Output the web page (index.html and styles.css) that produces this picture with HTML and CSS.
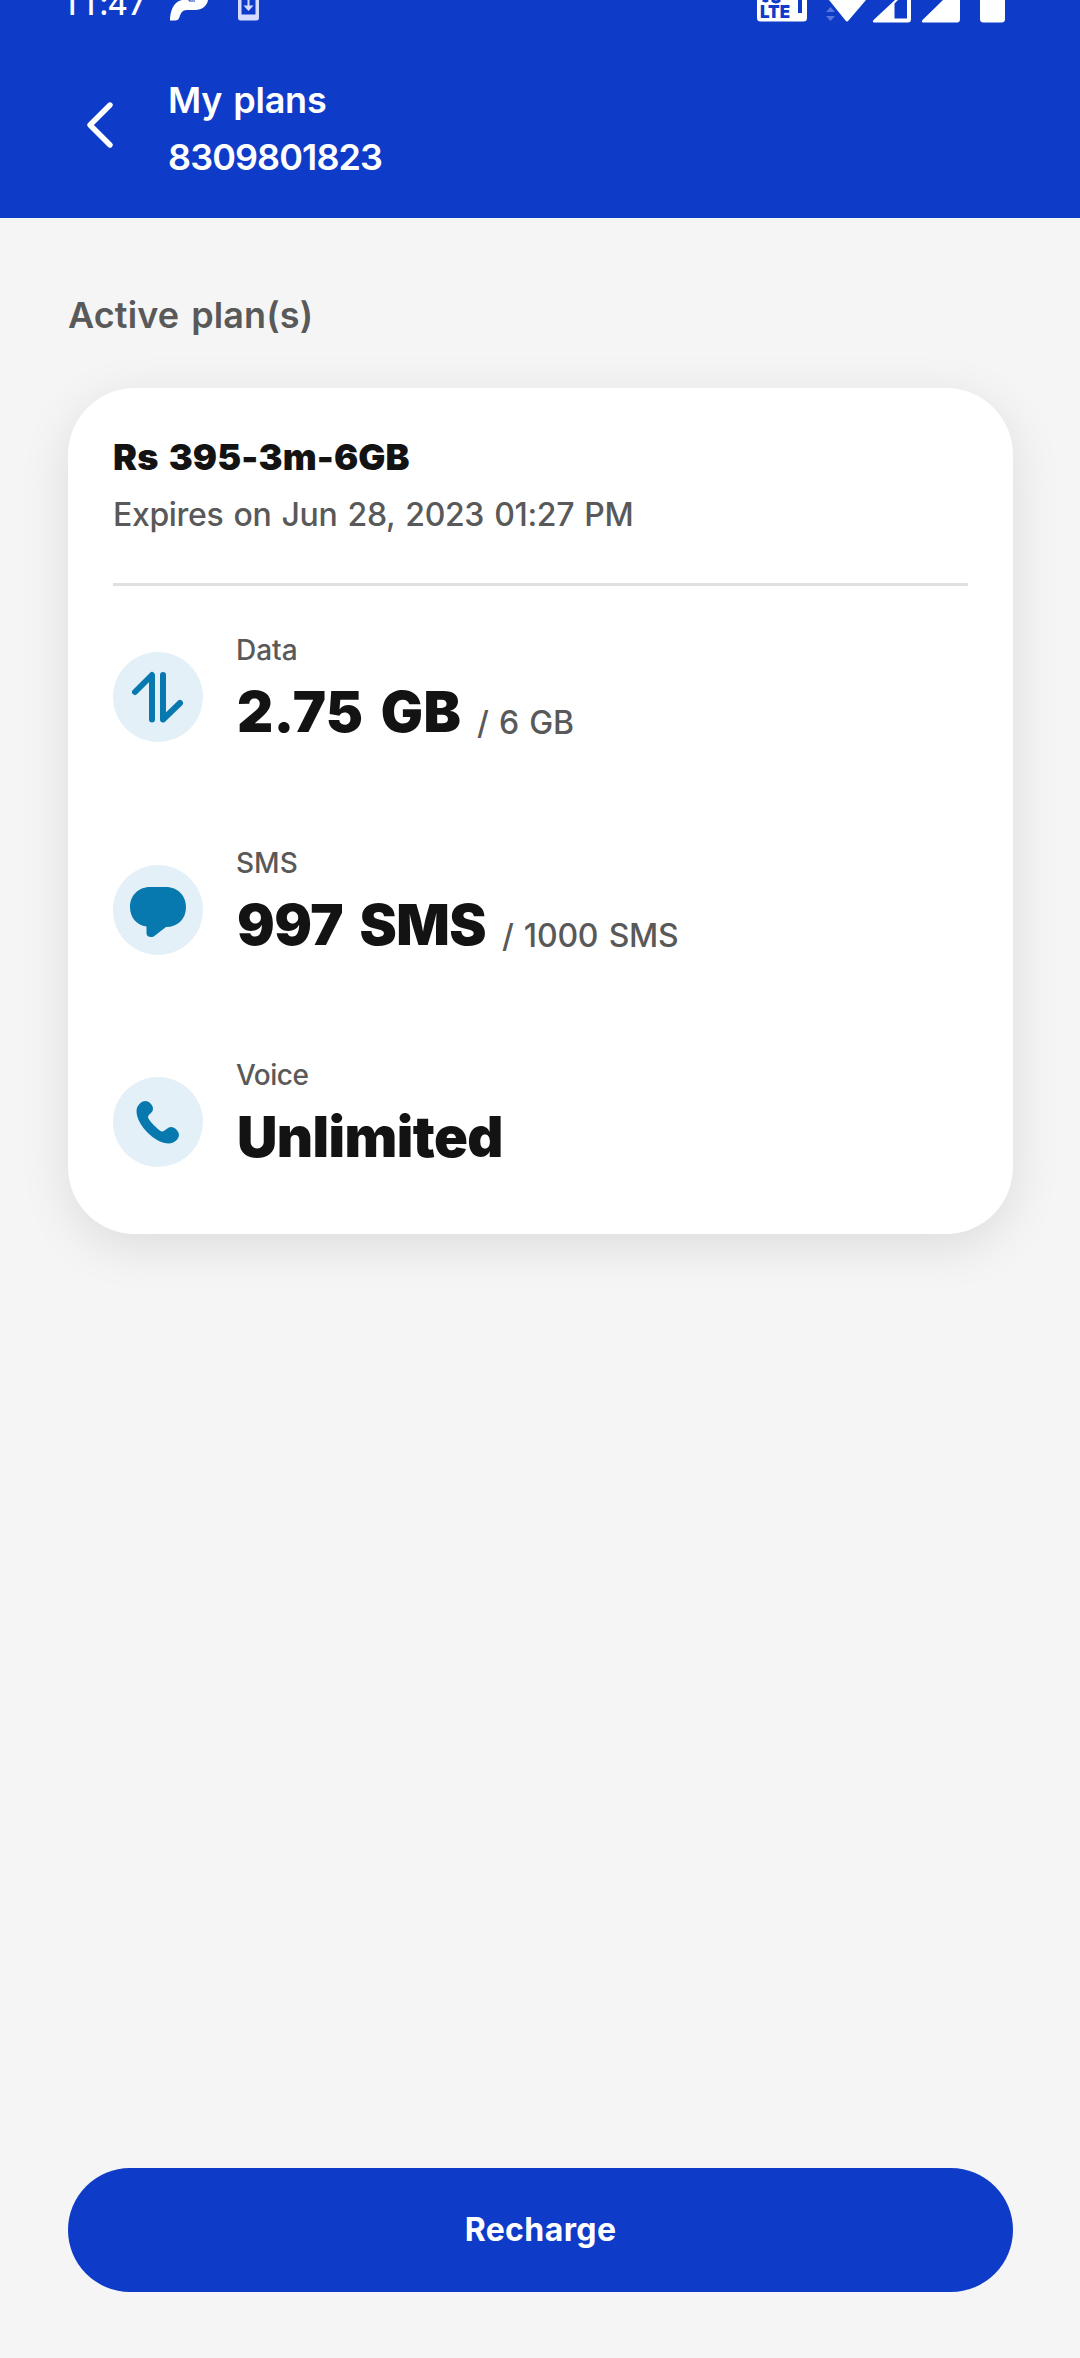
FILE: index.html
```html
<!DOCTYPE html>
<html lang="en">
<head>
<meta charset="utf-8">
<meta name="viewport" content="width=device-width">
<title>My plans</title>
<link rel="stylesheet" href="styles.css">
</head>
<body>
<div class="screen">
  <header class="header">
    <div class="status">
      <span class="time">11:47</span>
      <svg class="status-left" width="100" height="22" viewBox="164 0 100 22">
        <path d="M170 20.500C170 12 173 2 182 0H208C207 6 202 10 195 10H187C182 10 181 13 179.500 17Q178.500 20.500 175 20.500Z" fill="#fff"/>
        <path d="M189 0V1H195" fill="none" stroke="#0f3bc9" stroke-width="1"/>
        <path d="M238 0H259V18Q259 20.500 256 20.500H241Q238 20.500 238 18ZM241.500 0V14.500H255.500V0Z" fill="#d5dcff" fill-rule="evenodd"/>
        <path d="M247.500 0H249.500V5.500H253.500L248.500 11L243.500 5.500H247.500Z" fill="#d5dcff"/>
      </svg>
      <svg class="status-right" width="260" height="24" viewBox="750 0 260 24">
        <path d="M757 0H807V18Q807 21.500 803.500 21.500H760.500Q757 21.500 757 18Z" fill="#fff"/>
        <path d="M763 0Q765 2 768 0M772 0Q776 4 780 0" fill="none" stroke="#0f3bc9" stroke-width="3"/>
        <path d="M798 0H802V13H798Z" fill="#0f3bc9"/>
        <text class="lte" x="760" y="18" textLength="30" lengthAdjust="spacingAndGlyphs">LTE</text>
        <path d="M826 12L830.500 7L835 12ZM826 16H835L830.500 21Z" fill="#5876dc"/>
        <path d="M829 0H866L848.500 20.500Q847 22.500 845.500 20.500Z" fill="#fff"/>
        <path d="M895 0H911V19Q911 22.500 908 22.500H874Q872 22 873.500 20ZM898 0L894.500 3.500V18.500H907V0Z" fill="#fff" fill-rule="evenodd"/>
        <path d="M943 0H960V19Q960 22.500 957 22.500H923Q921 22 922.500 20Z" fill="#fff"/>
        <path d="M980 0H1005V19Q1005 22.500 1001.500 22.500H983.500Q980 22.500 980 19Z" fill="#fff"/>
      </svg>
    </div>
    <div class="appbar">
      <svg class="back" width="30" height="50" viewBox="0 0 30 50"><path d="M25 5L5 25L25 45" fill="none" stroke="#fff" stroke-width="5.400" stroke-linecap="round" stroke-linejoin="round"/></svg>
      <div>
        <div class="title">My plans</div>
        <div class="number">8309801823</div>
      </div>
    </div>
  </header>
  <main class="content">
    <h1 class="section">Active plan(s)</h1>
    <section class="card">
      <h2 class="plan">Rs 395-3m-6GB</h2>
      <p class="expiry">Expires on Jun 28, 2023 01:27 PM</p>
      <div class="divider"></div>
      <ul class="usage">
        <li class="row">
          <svg class="icon" width="90" height="90" viewBox="0 0 90 90"><circle cx="45" cy="45" r="45" fill="#e4f0f7"/><path d="M22 40L39 23V67.500M50 23V67.500L67 51" fill="none" stroke="#0779ae" stroke-width="6" stroke-linecap="round" stroke-linejoin="round"/></svg>
          <div class="text"><div class="label">Data</div><div class="values"><span class="value">2.75 GB</span><span class="total">/ 6 GB</span></div></div>
        </li>
        <li class="row">
          <svg class="icon" width="90" height="90" viewBox="0 0 90 90"><circle cx="45" cy="45" r="45" fill="#e4f0f7"/><path d="M37 22H53C65 22 73 31 73 42C73 54 65 62 53 62L42 70.500C39 73.500 33.500 72 33.500 68.500V61.500C23 60 17 52 17 42C17 31 25 22 37 22Z" fill="#0779ae"/></svg>
          <div class="text"><div class="label">SMS</div><div class="values"><span class="value sms">997 SMS</span><span class="total">/ 1000 SMS</span></div></div>
        </li>
        <li class="row">
          <svg class="icon" width="90" height="90" viewBox="0 0 90 90"><circle cx="45" cy="45" r="45" fill="#e4f0f7"/><path d="M32.500 24C36 24 40.500 28.500 40 32C40 36 35 37 35 40.500C36 44 46 53.500 48.500 54.500C52 55 54 50 58 50C62 50 66 54.500 66 58C66 62 61 66.500 56 66.500C42 66.500 23.500 48 23.500 34C23.500 29 28 24 32.500 24Z" fill="#0779ae"/></svg>
          <div class="text"><div class="label voice">Voice</div><div class="values"><span class="value unlimited">Unlimited</span></div></div>
        </li>
      </ul>
    </section>
    <button class="recharge" type="button">Recharge</button>
  </main>
</div>
</body>
</html>
```
FILE: styles.css
```css
* { box-sizing: border-box; margin: 0; padding: 0; }
body { background: #f5f5f5; font-family: Inter, "Liberation Sans", sans-serif; color: #131313; }
.screen { height: 2358px; display: flex; flex-direction: column; overflow: hidden; }
.header { height: 218px; background: #0f3bc9; color: #fff; }
.status { height: 24px; display: flex; align-items: flex-end; padding: 0 70px 0 62px; overflow: hidden; }
.time { font: 500 32px/40px "Noto Sans", sans-serif; width: 102px; margin-bottom: 1px; letter-spacing: .4px; }
.status-left { align-self: flex-start; }
.status-right { align-self: flex-start; margin-left: auto; }
.lte { font: 900 18px Inter, sans-serif; fill: #0f3bc9; }
.appbar { display: flex; align-items: flex-start; padding: 48px 0 0 85px; }
.back { margin: 28px 53px 0 0; }
.title { font-size: 36px; line-height: 56px; font-weight: 600; letter-spacing: -.2px; word-spacing: 2px; }
.number { font-size: 36px; line-height: 58px; font-weight: 600; letter-spacing: -.9px; }
.content { flex: 1; display: flex; flex-direction: column; padding: 69px 67px 66px 68px; }
.section { font-size: 36px; line-height: 56px; font-weight: 600; color: #595959; letter-spacing: .1px; word-spacing: 3px; }
.card { margin-top: 45px; height: 846px; border-radius: 67px; background: #fff; padding: 41px 45px 0; box-shadow: 0 12px 50px rgba(0, 0, 0, .1); }
.plan { font-size: 36px; line-height: 56px; font-weight: 900; word-spacing: 3px; letter-spacing: .1px; }
.expiry { font-size: 32px; line-height: 59px; font-weight: 450; color: #595959; letter-spacing: -.35px; word-spacing: 2px; }
.divider { height: 3px; margin-top: 39px; background: #e0e0e0; }
.usage { list-style: none; padding-top: 45px; }
.row { height: 212.500px; display: flex; gap: 34px; }
.icon { margin-top: 21px; flex: none; }
.label { font-size: 28px; line-height: 39px; font-weight: 450; color: #595959; margin-left: -1px; }
.voice { letter-spacing: -.5px; }
.values { display: flex; gap: 16px; }
.value { font-size: 56px; line-height: 84px; font-weight: 900; letter-spacing: .3px; word-spacing: 6px; }
.sms { letter-spacing: -.6px; }
.unlimited { letter-spacing: -.6px; }
.total { align-self: flex-end; font-size: 32px; line-height: 62px; font-weight: 450; color: #595959; letter-spacing: -.2px; word-spacing: 2px; }
.recharge { margin-top: auto; height: 124px; padding-bottom: 2px; border: 0; border-radius: 62px; background: #0f3bc9; color: #fff; font: 700 32px Inter, sans-serif; letter-spacing: .4px; }
```
